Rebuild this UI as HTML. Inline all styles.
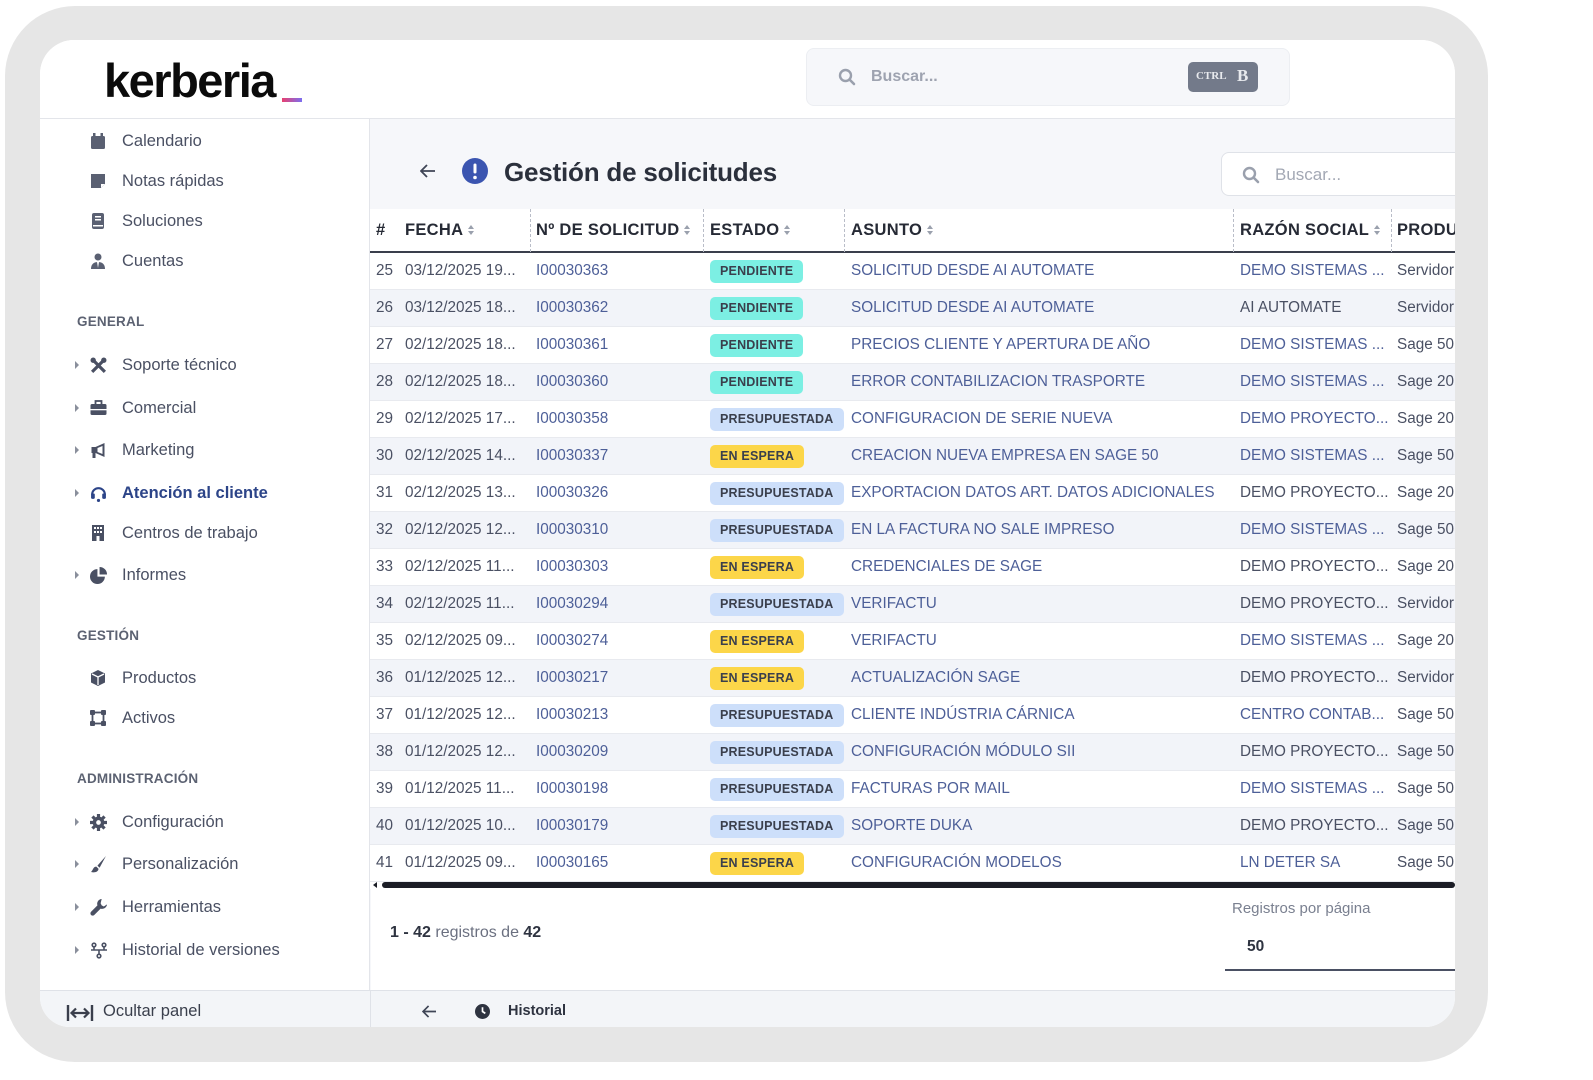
<!DOCTYPE html>
<html><head><meta charset="utf-8"><style>
*{box-sizing:border-box;margin:0;padding:0}
body{width:1593px;height:1080px;background:#fff;position:relative;overflow:hidden;font-family:"Liberation Sans",sans-serif;color:#3f4556}
.abs{position:absolute}
#frame{left:5px;top:6px;width:1483px;height:1056px;background:#e6e6e6;border-radius:70px}
#panel{left:40px;top:40px;width:1415px;height:987px;background:#fff;border-radius:34px 34px 30px 30px;overflow:hidden}
.side{position:absolute;left:0;top:79px;width:330px;height:871px;border-right:1px solid #e3e5ea;background:#fff}
.hdr{position:absolute;left:0;top:0;width:1415px;height:79px;border-bottom:1px solid #e3e5ea;background:#fff}
.main{position:absolute;left:330px;top:79px;width:1085px;height:871px;background:#f6f7fa}
.item{position:absolute;left:0;font-size:16.5px;color:#4a5063;height:20px;line-height:20px;white-space:nowrap}
.item .t{position:absolute;left:82px;top:0}
.item svg{position:absolute;left:50px;top:2px}
.item .car{position:absolute;left:35px;top:6px;width:0;height:0;border-left:4px solid #8a8f9c;border-top:4px solid transparent;border-bottom:4px solid transparent}
.sec{position:absolute;left:37px;font-size:13.5px;font-weight:bold;color:#5c6272;letter-spacing:.2px}
.tbl{position:absolute;left:0;top:90px;width:1085px;background:#fff}
.th{position:absolute;top:0;height:43px;line-height:43px;font-weight:bold;font-size:16.5px;color:#262a35;white-space:nowrap;letter-spacing:.3px}
.row{position:absolute;left:0;width:1085px;height:37px;border-bottom:1px solid #e8eaef;font-size:15.3px;line-height:36px;white-space:nowrap}
.row.alt{background:#f2f4f9}
.row span{position:absolute;top:0}
.lk{color:#4d5f98}
.gr{color:#4a5063}
.b{position:absolute;top:7px;height:23px;line-height:23px;border-radius:5px;font-size:12.5px;font-weight:bold;color:#3a3f4c;padding:0 10px;letter-spacing:.2px}
.pe{background:#7cefe3}.pr{background:#cddffa}.es{background:#fcd649}
.sort{display:inline-block;width:7px;height:11px;margin-left:5px;vertical-align:-1px;position:relative}
.sort:before{content:"";position:absolute;left:0;top:0;border-left:3.5px solid transparent;border-right:3.5px solid transparent;border-bottom:4px solid #9aa0ad}
.sort:after{content:"";position:absolute;left:0;top:6px;border-left:3.5px solid transparent;border-right:3.5px solid transparent;border-top:4px solid #9aa0ad}
.dv{position:absolute;top:0;height:43px;border-left:1.5px dashed #b9bdc8}
</style></head><body>
<div id="frame" class="abs"></div>
<div id="panel" class="abs">
 <div class="hdr">
  <div class="abs" style="left:64px;top:13px;font-size:47px;font-weight:bold;color:#0b0b0b;letter-spacing:-1.5px">kerberia</div>
  <div class="abs" style="left:242px;top:58px;width:20px;height:4px;background:linear-gradient(90deg,#e8416f,#7b6ef0)"></div>
  <div class="abs" style="left:766px;top:8px;width:484px;height:58px;background:#f6f7fa;border:1px solid #eceef2;border-radius:8px">
   <svg class="abs" style="left:31px;top:19px" width="18" height="18" viewBox="0 0 18 18"><circle cx="7.5" cy="7.5" r="5.5" fill="none" stroke="#9aa0ad" stroke-width="2.4"/><path d="M11.5 11.5L16 16" stroke="#9aa0ad" stroke-width="2.6" stroke-linecap="round"/></svg>
   <div class="abs" style="left:64px;top:19px;font-size:16px;font-weight:bold;color:#9ea3b0">Buscar...</div>
   <div class="abs" style="left:381px;top:13px;width:70px;height:30px;background:#737a8a;border-radius:5px;color:#e8eaee;font-family:'Liberation Serif',serif;font-weight:bold"><span class="abs" style="left:8px;top:8px;font-size:11px">CTRL</span><span class="abs" style="left:49px;top:4px;font-size:17px">B</span></div>
  </div>
 </div>
 <div class="side">
  <div class="item" style="top:12px"><svg width="16" height="16" viewBox="0 0 16 16"><rect x="1" y="3" width="14" height="13" rx="1.5" fill="#5a6072"/><rect x="3" y="0" width="2.5" height="4" fill="#5a6072"/><rect x="10.5" y="0" width="2.5" height="4" fill="#5a6072"/></svg><span class="t">Calendario</span></div>
  <div class="item" style="top:52px"><svg width="16" height="16" viewBox="0 0 16 16"><path d="M1 1h14v10l-4 4H1z" fill="#5a6072"/><path d="M11 15v-4h4" fill="#fff"/></svg><span class="t">Notas rápidas</span></div>
  <div class="item" style="top:92px"><svg width="16" height="16" viewBox="0 0 16 16"><rect x="2" y="0" width="12" height="16" rx="2" fill="#5a6072"/><rect x="5" y="3" width="6" height="1.5" fill="#fff"/><rect x="5" y="6" width="6" height="1.5" fill="#fff"/><rect x="3" y="12" width="10" height="1.5" fill="#fff"/></svg><span class="t">Soluciones</span></div>
  <div class="item" style="top:132px"><svg width="16" height="16" viewBox="0 0 16 16"><circle cx="8" cy="4" r="3.5" fill="#5a6072"/><path d="M1 16c0-5 3-7 7-7s7 2 7 7z" fill="#5a6072"/><path d="M7 9h2l-1 6z" fill="#fff"/></svg><span class="t">Cuentas</span></div>
  <div class="sec" style="top:195px">GENERAL</div>
  <div class="item" style="top:236px"><i class="car"></i><svg width="17" height="17" viewBox="0 0 16 16"><path d="M2 2l12 12M14 2L2 14" stroke="#4a5063" stroke-width="3"/><circle cx="3" cy="3" r="2.5" fill="#4a5063"/><circle cx="13" cy="3" r="2.5" fill="#4a5063"/></svg><span class="t">Soporte técnico</span></div>
  <div class="item" style="top:279px"><i class="car"></i><svg width="17" height="16" viewBox="0 0 16 16"><rect x="0" y="4" width="16" height="11" rx="1.5" fill="#4a5063"/><rect x="5" y="1" width="6" height="4" fill="none" stroke="#4a5063" stroke-width="1.8"/><rect x="0" y="9" width="16" height="1.3" fill="#fff"/></svg><span class="t">Comercial</span></div>
  <div class="item" style="top:321px"><i class="car"></i><svg width="17" height="16" viewBox="0 0 16 16"><path d="M1 5h4l9-4v14l-9-4H1z" fill="#4a5063"/><rect x="2" y="11" width="3" height="5" fill="#4a5063"/><path d="M7 6l5-2v8l-5-2z" fill="#fff"/></svg><span class="t">Marketing</span></div>
  <div class="item" style="top:364px;color:#2c4488;font-weight:bold"><i class="car"></i><svg width="17" height="17" viewBox="0 0 16 16"><path d="M2 9a6 6 0 0112 0" fill="none" stroke="#2c4488" stroke-width="2"/><rect x="1" y="8" width="3.5" height="5" rx="1" fill="#2c4488"/><rect x="11.5" y="8" width="3.5" height="5" rx="1" fill="#2c4488"/><circle cx="8" cy="14.5" r="1.5" fill="#2c4488"/></svg><span class="t">Atención al cliente</span></div>
  <div class="item" style="top:404px"><svg width="16" height="16" viewBox="0 0 16 16"><rect x="2" y="0" width="12" height="16" fill="#4a5063"/><g fill="#fff"><rect x="4" y="2" width="2" height="2"/><rect x="7" y="2" width="2" height="2"/><rect x="10" y="2" width="2" height="2"/><rect x="4" y="6" width="2" height="2"/><rect x="7" y="6" width="2" height="2"/><rect x="10" y="6" width="2" height="2"/><rect x="6.5" y="11" width="3" height="5"/></g></svg><span class="t">Centros de trabajo</span></div>
  <div class="item" style="top:446px"><i class="car"></i><svg width="17" height="17" viewBox="0 0 16 16"><path d="M7 2a7 7 0 107 7H7z" fill="#4a5063"/><path d="M9 0a7 7 0 017 7H9z" fill="#4a5063"/></svg><span class="t">Informes</span></div>
  <div class="sec" style="top:509px">GESTIÓN</div>
  <div class="item" style="top:549px"><svg width="16" height="16" viewBox="0 0 16 16"><path d="M8 0l7 3.5v9L8 16 1 12.5v-9z" fill="#4a5063"/><path d="M8 7v8M2 4l6 3 6-3" stroke="#fff" stroke-width="1.3" fill="none"/></svg><span class="t">Productos</span></div>
  <div class="item" style="top:589px"><svg width="16" height="16" viewBox="0 0 16 16"><rect x="2.5" y="2.5" width="11" height="11" fill="none" stroke="#4a5063" stroke-width="1.8"/><g fill="#4a5063"><rect x="0" y="0" width="5" height="5" rx="1"/><rect x="11" y="0" width="5" height="5" rx="1"/><rect x="0" y="11" width="5" height="5" rx="1"/><rect x="11" y="11" width="5" height="5" rx="1"/></g></svg><span class="t">Activos</span></div>
  <div class="sec" style="top:652px">ADMINISTRACIÓN</div>
  <div class="item" style="top:693px"><i class="car"></i><svg width="17" height="17" viewBox="0 0 16 16"><circle cx="8" cy="8" r="5.5" fill="#4a5063"/><g stroke="#4a5063" stroke-width="3"><path d="M8 0v16M0 8h16M2.3 2.3l11.4 11.4M13.7 2.3L2.3 13.7"/></g><circle cx="8" cy="8" r="2.2" fill="#fff"/></svg><span class="t">Configuración</span></div>
  <div class="item" style="top:735px"><i class="car"></i><svg width="17" height="17" viewBox="0 0 16 16"><path d="M15 0L7 9l2 2z" fill="#4a5063"/><path d="M6 10c-3 0-3 3-5 5 3 1 7 0 7-3z" fill="#4a5063"/></svg><span class="t">Personalización</span></div>
  <div class="item" style="top:778px"><i class="car"></i><svg width="17" height="17" viewBox="0 0 16 16"><path d="M11 0a4.5 4.5 0 00-4 6L1 12a2 2 0 003 3l6-6a4.5 4.5 0 006-4l-3 2-2-1-1-2z" fill="#4a5063"/></svg><span class="t">Herramientas</span></div>
  <div class="item" style="top:821px"><i class="car"></i><svg width="18" height="17" viewBox="0 0 18 16"><g fill="none" stroke="#4a5063" stroke-width="1.6"><circle cx="4" cy="2.5" r="1.8"/><circle cx="14" cy="2.5" r="1.8"/><circle cx="9" cy="13.5" r="1.8"/><path d="M4 4.5v3h10v-3M1 7.5h16M9 7.5v4"/></g></svg><span class="t">Historial de versiones</span></div>
 </div>
 <div class="main">
  <svg class="abs" style="left:50px;top:45px" width="16" height="14" viewBox="0 0 16 14"><path d="M15 7H2M7 1L1 7l6 6" fill="none" stroke="#3f4556" stroke-width="1.8"/></svg>
  <svg class="abs" style="left:92px;top:39px" width="26" height="26" viewBox="0 0 26 26"><circle cx="13" cy="13" r="13" fill="#3b55b0"/><rect x="11.5" y="5.5" width="3" height="10" rx="1.5" fill="#fff"/><circle cx="13" cy="19.5" r="1.8" fill="#fff"/></svg>
  <div class="abs" style="left:134px;top:38px;font-size:26px;font-weight:bold;color:#2b303c;letter-spacing:-0.2px">Gestión de solicitudes</div>
  <div class="abs" style="left:851px;top:33px;width:260px;height:44px;background:#fff;border:1px solid #dfe2e8;border-radius:8px">
   <svg class="abs" style="left:20px;top:13px" width="18" height="18" viewBox="0 0 18 18"><circle cx="7.5" cy="7.5" r="5.5" fill="none" stroke="#9aa0ad" stroke-width="2.4"/><path d="M11.5 11.5L16 16" stroke="#9aa0ad" stroke-width="2.6" stroke-linecap="round"/></svg>
   <div class="abs" style="left:53px;top:12px;font-size:17px;color:#a3a8b4">Buscar...</div>
  </div>
  <div class="abs" style="left:1px;top:760px;width:1084px;height:111px;background:#fff"></div>
  <div class="tbl" style="height:680px">
   <div style="position:absolute;left:0;top:0;width:1085px;height:44px;border-bottom:2.5px solid #3a3f4c"></div>
   <div class="th" style="left:6px">#</div>
   <div class="th" style="left:35px">FECHA<i class="sort"></i></div>
   <div class="dv" style="left:160px"></div>
   <div class="th" style="left:166px">Nº DE SOLICITUD<i class="sort"></i></div>
   <div class="dv" style="left:333px"></div>
   <div class="th" style="left:340px">ESTADO<i class="sort"></i></div>
   <div class="dv" style="left:474px"></div>
   <div class="th" style="left:481px">ASUNTO<i class="sort"></i></div>
   <div class="dv" style="left:863px"></div>
   <div class="th" style="left:870px">RAZÓN SOCIAL<i class="sort"></i></div>
   <div class="dv" style="left:1021px"></div>
   <div class="th" style="left:1027px">PRODU</div>
   <div id="rows"></div>
   <div class="abs" style="left:12px;top:673px;width:1073px;height:6px;background:#1b1d26;border-radius:3px"></div>
   <div class="abs" style="left:3px;top:673px;border-right:4px solid #1b1d26;border-top:3px solid transparent;border-bottom:3px solid transparent"></div>
  </div>
 </div>
 <div class="abs" style="left:350px;top:884px;font-size:16px;color:#6b7080"><b style="color:#2e3340">1 - 42</b> registros de <b style="color:#2e3340">42</b></div>
 <div class="abs" style="left:1192px;top:860px;font-size:15px;color:#7a8090">Registros por página</div>
 <div class="abs" style="left:1207px;top:898px;font-size:15.5px;font-weight:bold;color:#2e3340">50</div>
 <div class="abs" style="left:1185px;top:929px;width:240px;height:1.5px;background:#4a5063"></div>
 <div class="abs" style="left:0;top:950px;width:1415px;height:37px;background:#f3f5f8;border-top:1px solid #dfe2e8"></div>
 <div class="abs" style="left:330px;top:950px;width:1px;height:37px;background:#dfe2e8"></div>
 <svg class="abs" style="left:26px;top:964px" width="28" height="18" viewBox="0 0 28 18"><path d="M2 1v16M26 1v16" stroke="#3a3f4c" stroke-width="2.4"/><path d="M6 9h16M10 4.5L5.5 9 10 13.5M18 4.5L22.5 9 18 13.5" fill="none" stroke="#3a3f4c" stroke-width="2.2"/></svg>
 <div class="abs" style="left:63px;top:962px;font-size:16.5px;color:#3a3f4c">Ocultar panel</div>
 <svg class="abs" style="left:382px;top:965px" width="15" height="13" viewBox="0 0 16 14"><path d="M15 7H2M7 1L1 7l6 6" fill="none" stroke="#3f4556" stroke-width="1.8"/></svg>
 <svg class="abs" style="left:435px;top:964px" width="15" height="15" viewBox="0 0 16 16"><circle cx="8" cy="8" r="8" fill="#2e3340"/><path d="M8 3.5V8l3 2" stroke="#fff" stroke-width="1.8" fill="none"/></svg>
 <div class="abs" style="left:468px;top:963px;font-size:14.5px;font-weight:bold;color:#2e3340">Historial</div>
</div>
<script>
var d=[
[25,"03/12/2025 19...","I00030363","pe","SOLICITUD DESDE AI AUTOMATE","DEMO SISTEMAS ...",1,"Servidor"],
[26,"03/12/2025 18...","I00030362","pe","SOLICITUD DESDE AI AUTOMATE","AI AUTOMATE",0,"Servidor"],
[27,"02/12/2025 18...","I00030361","pe","PRECIOS CLIENTE Y APERTURA DE AÑO","DEMO SISTEMAS ...",1,"Sage 50"],
[28,"02/12/2025 18...","I00030360","pe","ERROR CONTABILIZACION TRASPORTE","DEMO SISTEMAS ...",1,"Sage 20"],
[29,"02/12/2025 17...","I00030358","pr","CONFIGURACION DE SERIE NUEVA","DEMO PROYECTO...",1,"Sage 20"],
[30,"02/12/2025 14...","I00030337","es","CREACION NUEVA EMPRESA EN SAGE 50","DEMO SISTEMAS ...",1,"Sage 50"],
[31,"02/12/2025 13...","I00030326","pr","EXPORTACION DATOS ART. DATOS ADICIONALES","DEMO PROYECTO...",0,"Sage 20"],
[32,"02/12/2025 12...","I00030310","pr","EN LA FACTURA NO SALE IMPRESO","DEMO SISTEMAS ...",1,"Sage 50"],
[33,"02/12/2025 11...","I00030303","es","CREDENCIALES DE SAGE","DEMO PROYECTO...",0,"Sage 20"],
[34,"02/12/2025 11...","I00030294","pr","VERIFACTU","DEMO PROYECTO...",0,"Servidor"],
[35,"02/12/2025 09...","I00030274","es","VERIFACTU","DEMO SISTEMAS ...",1,"Sage 20"],
[36,"01/12/2025 12...","I00030217","es","ACTUALIZACIÓN SAGE","DEMO PROYECTO...",0,"Servidor"],
[37,"01/12/2025 12...","I00030213","pr","CLIENTE INDÚSTRIA CÁRNICA","CENTRO CONTAB...",1,"Sage 50"],
[38,"01/12/2025 12...","I00030209","pr","CONFIGURACIÓN MÓDULO SII","DEMO PROYECTO...",0,"Sage 50"],
[39,"01/12/2025 11...","I00030198","pr","FACTURAS POR MAIL","DEMO SISTEMAS ...",1,"Sage 50"],
[40,"01/12/2025 10...","I00030179","pr","SOPORTE DUKA","DEMO PROYECTO...",0,"Sage 50"],
[41,"01/12/2025 09...","I00030165","es","CONFIGURACIÓN MODELOS","LN DETER SA",1,"Sage 50"]];
var L={pe:"PENDIENTE",pr:"PRESUPUESTADA",es:"EN ESPERA"},h="";
d.forEach(function(r,i){h+='<div class="row'+(i%2?' alt':'')+'" style="top:'+(44+i*37)+'px"><span class="gr" style="left:6px">'+r[0]+'</span><span class="gr" style="left:35px">'+r[1]+'</span><span class="lk" style="left:166px">'+r[2]+'</span><i class="b '+r[3]+'" style="left:340px;font-style:normal">'+L[r[3]]+'</i><span class="lk" style="left:481px">'+r[4]+'</span><span class="'+(r[6]?'lk':'gr')+'" style="left:870px">'+r[5]+'</span><span class="gr" style="left:1027px">'+r[7]+'</span></div>';});
document.getElementById("rows").innerHTML=h;
</script>
</body></html>
